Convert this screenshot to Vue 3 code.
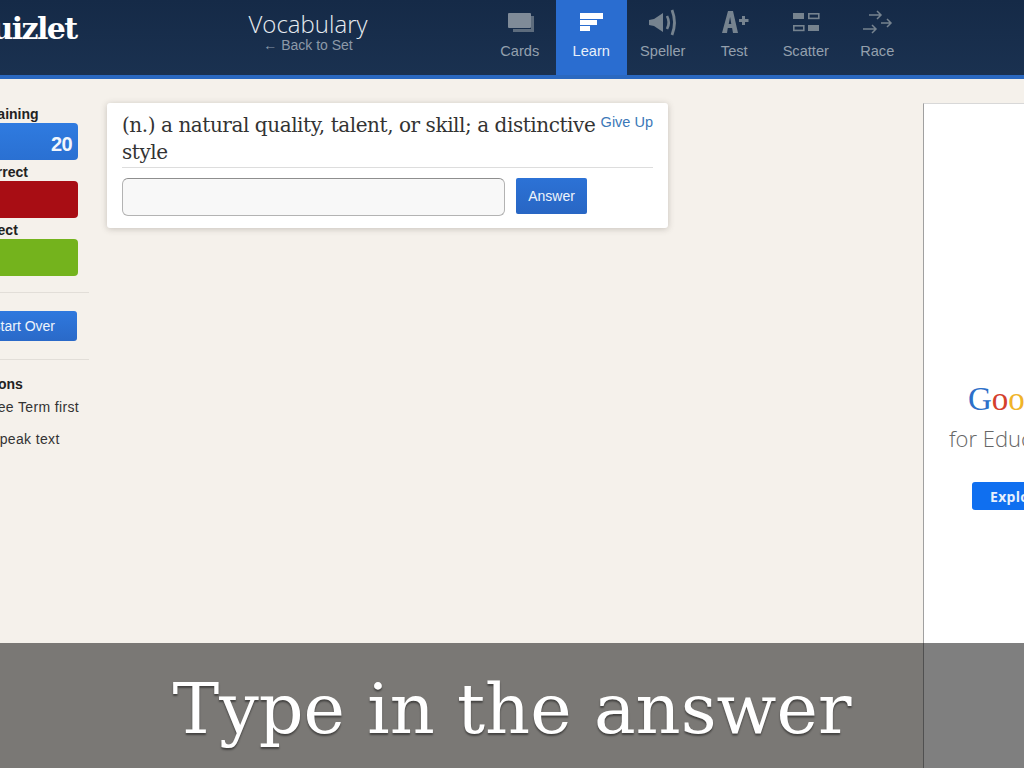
<script setup>
const tabs = [
  { label: 'Cards', icon: 'cards' },
  { label: 'Learn', icon: 'learn', active: true },
  { label: 'Speller', icon: 'speller' },
  { label: 'Test', icon: 'test' },
  { label: 'Scatter', icon: 'scatter' },
  { label: 'Race', icon: 'race' }
]
</script>

<template>
  <div class="page">
    <header class="topbar">
      <div class="logo">Quizlet</div>
      <div class="set-title">
        <div class="set-name">Vocabulary</div>
        <div class="back-link">← Back to Set</div>
      </div>
      <nav class="modes">
        <div v-for="tab in tabs" :key="tab.label" class="mode" :class="{ active: tab.active }">
          <svg class="mode-icon" width="32" height="26" viewBox="0 0 32 26">
            <g v-if="tab.icon === 'cards'">
              <path d="M27 6h3v16H9v-3h18z" fill="#5d6c7d" />
              <rect x="4" y="3" width="23" height="15" rx="1" fill="#7f8b98" />
            </g>
            <g v-if="tab.icon === 'learn'" fill="#fff">
              <rect x="5" y="3" width="23" height="6" />
              <rect x="5" y="10" width="17" height="5" />
              <rect x="5" y="16" width="10" height="5" />
            </g>
            <g v-if="tab.icon === 'speller'" fill="#76838f">
              <path d="M2 10l5-1 9-6v19l-9-6-5-1z" />
              <path d="M20 6q3.500 6.500 0 13" fill="none" stroke="#76838f" stroke-width="2.600" />
              <path d="M25 0q5 12.500 0 25" fill="none" stroke="#76838f" stroke-width="2.800" />
            </g>
            <g v-if="tab.icon === 'test'" fill="#76838f">
              <path d="M4 23 10 1h5l5 22h-5l-.9-5H9.800L9 23zM10.700 14h2.600l-1.200-7z" />
              <path d="M21 9h3V6h3v3h3.500v3H27v3h-3v-3h-3z" />
            </g>
            <g v-if="tab.icon === 'scatter'">
              <rect x="3" y="3" width="11" height="6" fill="#76838f" />
              <rect x="18.800" y="3.800" width="10" height="4.600" fill="none" stroke="#76838f" stroke-width="1.600" />
              <rect x="3.800" y="15.800" width="10" height="4.600" fill="none" stroke="#76838f" stroke-width="1.600" />
              <rect x="18" y="15" width="11" height="6" fill="#76838f" />
            </g>
            <g v-if="tab.icon === 'race'" fill="none" stroke="#76838f" stroke-width="1.500">
              <path d="M8 5h12M16 1l4 4-4 4" />
              <path d="M20 13h10M26 9l4 4-4 4" />
              <path d="M2 19h13M11 15l4 4-4 4" />
            </g>
          </svg>
          <span class="mode-label">{{ tab.label }}</span>
        </div>
      </nav>
    </header>

    <main class="content">
      <aside class="sidebar">
        <div class="stat-label label-remaining">Remaining</div>
        <div class="stat stat-blue">20</div>
        <div class="stat-label label-incorrect">Incorrect</div>
        <div class="stat stat-red"></div>
        <div class="stat-label label-correct">Correct</div>
        <div class="stat stat-green"></div>
        <hr class="rule rule-top" />
        <button class="start-over">Start Over</button>
        <hr class="rule rule-bottom" />
        <div class="options-title">Options</div>
        <div class="option option-first">See Term first</div>
        <div class="option option-second">Speak text</div>
      </aside>

      <section class="card">
        <div class="prompt">
          <div class="definition">(n.) a natural quality, talent, or skill; a distinctive style</div>
          <a class="give-up">Give Up</a>
        </div>
        <div class="answer-row">
          <input class="answer-input" type="text" />
          <button class="answer-btn">Answer</button>
        </div>
      </section>

      <aside class="ad">
        <div class="ad-logo"><span class="g-blue">G</span><span class="g-red">o</span><span class="g-yellow">o</span><span class="g-blue">g</span><span class="g-green">l</span><span class="g-red">e</span></div>
        <div class="ad-sub">for Education</div>
        <button class="ad-btn">Explore</button>
      </aside>
    </main>

    <div class="caption">Type in the answer</div>
  </div>
</template>

<style>
html, body {
  margin: 0;
  overflow: hidden;
}
</style>

<style scoped>
.page {
  position: relative;
  width: 1024px;
  height: 768px;
  overflow: hidden;
  background: #f5f1eb;
  font-family: "Liberation Sans", Arial, sans-serif;
}

.topbar {
  display: flex;
  height: 75px;
  background: linear-gradient(#152a47, #1a3150);
  border-bottom: 4px solid #2a68c0;
}

.logo {
  width: 77px;
  margin-left: -33px;
  margin-right: 3px;
  padding-top: 11px;
  flex-shrink: 0;
  font-family: "DejaVu Serif", serif;
  font-size: 30px;
  font-weight: 700;
  letter-spacing: -1.6px;
  color: #fff;
  white-space: nowrap;
}

.set-title {
  width: 230px;
  margin-left: 146px;
  padding-top: 10px;
  flex-shrink: 0;
  text-align: center;
}

.set-name {
  font-family: "Open Sans", sans-serif;
  font-size: 24px;
  font-weight: 300;
  line-height: 27px;
  color: #e6ebf0;
}

.back-link {
  font-size: 14px;
  line-height: 17px;
  color: #8c99a8;
}

.modes {
  display: flex;
  margin-left: 61px;
}

.mode {
  width: 71.500px;
  display: flex;
  flex-direction: column;
  align-items: center;
  padding-top: 10px;
  box-sizing: border-box;
  color: #94a0ad;
}

.mode.active {
  background: #2a6dd0;
  color: #e8f0fa;
}

.mode-icon {
  overflow: visible;
}

.mode-label {
  margin-top: 7px;
  font-size: 14.600px;
  line-height: 16px;
}

.content {
  display: flex;
  align-items: flex-start;
  height: 689px;
}

.sidebar {
  width: 119px;
  margin-left: -30px;
  padding-top: 27px;
  flex-shrink: 0;
  box-sizing: border-box;
  font-size: 14px;
  color: #222;
}

.stat-label {
  height: 17px;
  line-height: 17px;
  font-weight: 700;
  text-align: right;
  font-size: 14px;
}

.label-remaining {
  width: 69px;
  margin-left: -3px;
}

.label-incorrect {
  width: 56px;
  margin-left: -2px;
}

.label-correct {
  width: 48px;
  margin-left: -2px;
}

.stat {
  width: 108px;
  height: 37px;
  margin-bottom: 4px;
  border-radius: 4px;
  box-sizing: border-box;
  padding-right: 6px;
  text-align: right;
  font-size: 20px;
  font-weight: 700;
  letter-spacing: -.6px;
  line-height: 42px;
  color: #f2f6fc;
}

.stat-blue {
  background: linear-gradient(#2f7be0, #2a70d2);
}

.stat-red {
  background: #a80d14;
}

.stat-green {
  background: #74b31d;
}

.rule {
  margin: 0;
  border: 0;
  border-top: 1px solid #e2ded8;
}

.rule-top {
  margin-top: 16px;
}

.start-over {
  display: block;
  width: 107px;
  height: 30px;
  margin: 18px 0 18px;
  padding: 0 22px 0 0;
  border: 0;
  border-radius: 3px;
  background: linear-gradient(#2f78de, #2a69c8);
  color: #eef4fb;
  font-family: inherit;
  font-size: 14px;
  text-align: right;
}

.options-title {
  margin-top: 16px;
  width: 50px;
  font-weight: 700;
  text-align: right;
  line-height: 17px;
}

.option {
  color: #333;
  line-height: 17px;
  white-space: nowrap;
  letter-spacing: .35px;
}

.option-first {
  margin-top: 6px;
  margin-left: 18px;
}

.option-second {
  margin-top: 15px;
  margin-left: 20px;
}

.card {
  width: 561px;
  height: 125px;
  margin: 24px 0 0 18px;
  padding: 9px 15px 0;
  flex-shrink: 0;
  box-sizing: border-box;
  background: #fff;
  border-radius: 3px;
  box-shadow: 0 1px 6px rgba(80, 70, 60, .28);
}

.prompt {
  display: flex;
  justify-content: space-between;
  align-items: flex-start;
  padding-bottom: 1px;
  border-bottom: 1px solid #dddddd;
}

.definition {
  width: 478px;
  font-family: "DejaVu Serif", serif;
  font-size: 20px;
  line-height: 27px;
  letter-spacing: -.44px;
  color: #333;
}

.give-up {
  margin-top: 2px;
  font-size: 14.500px;
  color: #3b78b8;
  white-space: nowrap;
}

.answer-row {
  display: flex;
  align-items: flex-start;
  gap: 11px;
  margin-top: 10px;
}

.answer-input {
  width: 383px;
  height: 38px;
  padding: 0;
  box-sizing: border-box;
  background: #f8f8f8;
  border: 1px solid #b3b3b3;
  border-top-color: #8e8e8e;
  border-radius: 6px;
}

.answer-btn {
  width: 71px;
  height: 36px;
  padding: 0;
  border: 0;
  border-radius: 2px;
  background: linear-gradient(#2c72d6, #2866c4);
  color: #eef4fb;
  font-family: inherit;
  font-size: 14px;
}

.ad {
  width: 120px;
  height: 665px;
  margin: 24px 0 0 255px;
  padding-top: 277px;
  flex-shrink: 0;
  box-sizing: border-box;
  background: #fff;
  border-left: 1px solid #a0a0a0;
  border-top: 1px solid #d8d8d8;
  white-space: nowrap;
}

.ad-logo {
  margin-left: 44px;
  font-family: "Liberation Serif", serif;
  font-size: 33px;
  line-height: 36px;
}

.g-blue { color: #2d6fc9; }
.g-red { color: #d4402c; }
.g-yellow { color: #f0b429; }
.g-green { color: #3f9c3f; }

.ad-sub {
  margin-top: 6px;
  margin-left: 25px;
  font-family: "Open Sans", sans-serif;
  font-size: 22px;
  font-weight: 300;
  line-height: 30px;
  color: #666;
}

.ad-btn {
  display: block;
  width: 110px;
  height: 28px;
  margin: 29px 0 0 48px;
  padding: 0 0 0 18px;
  border: 0;
  border-radius: 3px;
  background: #0f6ff0;
  color: #e8f0fc;
  font-family: "Open Sans", sans-serif;
  font-size: 14px;
  font-weight: 700;
  text-align: left;
  letter-spacing: .3px;
}

.caption {
  position: absolute;
  left: 0;
  right: 0;
  bottom: 0;
  height: 125px;
  background: rgba(0, 0, 0, .5);
  font-family: "DejaVu Serif", serif;
  font-size: 70px;
  line-height: 132px;
  text-align: center;
  color: #fff;
  text-shadow: 0 2px 2px rgba(0, 0, 0, .45);
}
</style>
